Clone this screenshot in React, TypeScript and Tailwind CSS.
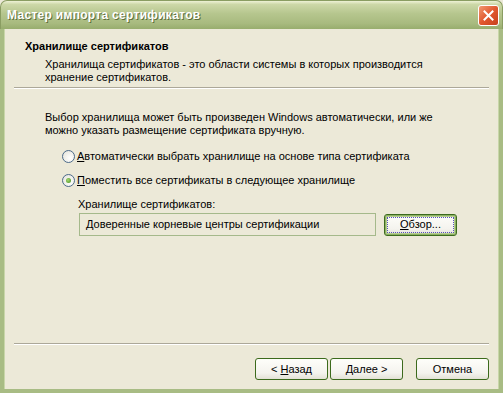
import React from 'react';

function Btn({ children, focused = false }: { children: React.ReactNode; focused?: boolean }) {
  return (
    <div
      className={
        'w-[73px] h-[22px] rounded-[3px] border border-[#3c6a1c] flex items-center justify-center bg-[linear-gradient(#fefefa,#f4f3ee_70%,#e3e1d6)] ' +
        (focused ? 'shadow-[inset_0_0_0_1px_#8db066,inset_0_0_0_2px_#b8d08f] p-[2px]' : '')
      }
    >
      {focused ? (
        <div className="w-full h-full border border-dotted border-[#5a4fbf] flex items-center justify-center leading-[13px]">
          {children}
        </div>
      ) : (
        <span className="leading-[13px]">{children}</span>
      )}
    </div>
  );
}

function Radio({ checked, children }: { checked?: boolean; children: React.ReactNode }) {
  return (
    <div className="flex items-center h-[13px]">
      <div className="w-[13px] h-[13px] rounded-full border border-[#4b6a8a] bg-[radial-gradient(circle_at_65%_65%,#ffffff,#e8e7df_80%,#d6d4c8)] flex items-center justify-center">
        {checked && <div className="w-[5px] h-[5px] rounded-full bg-[radial-gradient(circle_at_40%_40%,#a7d870,#3f8b1a)]" />}
      </div>
      <span className="ml-[2px]">{children}</span>
    </div>
  );
}

export default function App() {
  return (
    <div
      className="w-[503px] h-[393px] flex flex-col text-[11px] leading-[13px] text-black bg-[#ece9d8]"
      style={{ fontFamily: '"Liberation Sans", Arial, sans-serif' }}
    >
      {/* title bar */}
      <div className="h-[29px] shrink-0 flex items-center rounded-t-[7px] border border-[#8a9d62] border-b-0 bg-[linear-gradient(#eef2d6,#cdd8a8_12%,#b6c68e_45%,#a8ba7f_80%,#98ad6e)]">
        <span className="ml-[6px] text-white font-bold text-[12px] [text-shadow:1px_1px_0_#5d6e3c] tracking-[0.3px]">
          Мастер импорта сертификатов
        </span>
        <div className="ml-auto mr-[3px] w-[21px] h-[21px] rounded-[3px] border border-white bg-[linear-gradient(135deg,#f19a72,#e1582f_50%,#c8401c)] flex items-center justify-center">
          <svg width="11" height="11" viewBox="0 0 11 11">
            <path d="M1.5 1.5 L9.5 9.5 M9.5 1.5 L1.5 9.5" stroke="white" strokeWidth="2" strokeLinecap="square" />
          </svg>
        </div>
      </div>

      {/* client area with frame */}
      <div className="flex-1 flex flex-col border-x-4 border-b-4 border-[#a8bc84] shadow-[inset_1px_0_0_#c8d6a9,inset_-1px_0_0_#c8d6a9]">
        <div className="pt-[11px] pl-[21px] font-bold">Хранилище сертификатов</div>
        <div className="mt-[5px] pl-[41px]">
          <div>Хранилища сертификатов - это области системы в которых производится</div>
          <div>хранение сертификатов.</div>
        </div>
        <div className="mt-[3px] mx-[10px] border-t border-[#aca899] border-b border-b-white" />

        <div className="mt-[22px] pl-[41px]">
          <div>Выбор хранилища может быть произведен Windows автоматически, или же</div>
          <div>можно указать размещение сертификата вручную.</div>
        </div>

        <div className="mt-[13px] pl-[58px]">
          <Radio>
            <span className="underline">А</span>втоматически выбрать хранилище на основе типа сертификата
          </Radio>
        </div>
        <div className="mt-[11px] pl-[58px]">
          <Radio checked>
            <span className="underline">П</span>оместить все сертификаты в следующее хранилище
          </Radio>
        </div>

        <div className="mt-[11px] pl-[74px]">Хранилище сертификатов:</div>
        <div className="mt-[2px] pl-[75px] flex items-center">
          <div className="w-[297px] h-[23px] border border-[#a5b98b] flex items-center pl-[6px]">
            Доверенные корневые центры сертификации
          </div>
          <div className="ml-[8px]">
            <Btn focused>
              <span className="underline">О</span>бзор...
            </Btn>
          </div>
        </div>

        <div className="flex-1" />
        <div className="mx-[10px] border-t border-[#aca899] border-b border-b-white" />
        <div className="mt-[13px] mb-[9px] flex justify-end pr-[10px]">
          <Btn>
            &lt; <span className="underline">Н</span>азад
          </Btn>
          <div className="ml-[2px]">
            <Btn>
              <span className="underline">Д</span>алее &gt;
            </Btn>
          </div>
          <div className="ml-[13px]">
            <Btn>Отмена</Btn>
          </div>
        </div>
      </div>
    </div>
  );
}
